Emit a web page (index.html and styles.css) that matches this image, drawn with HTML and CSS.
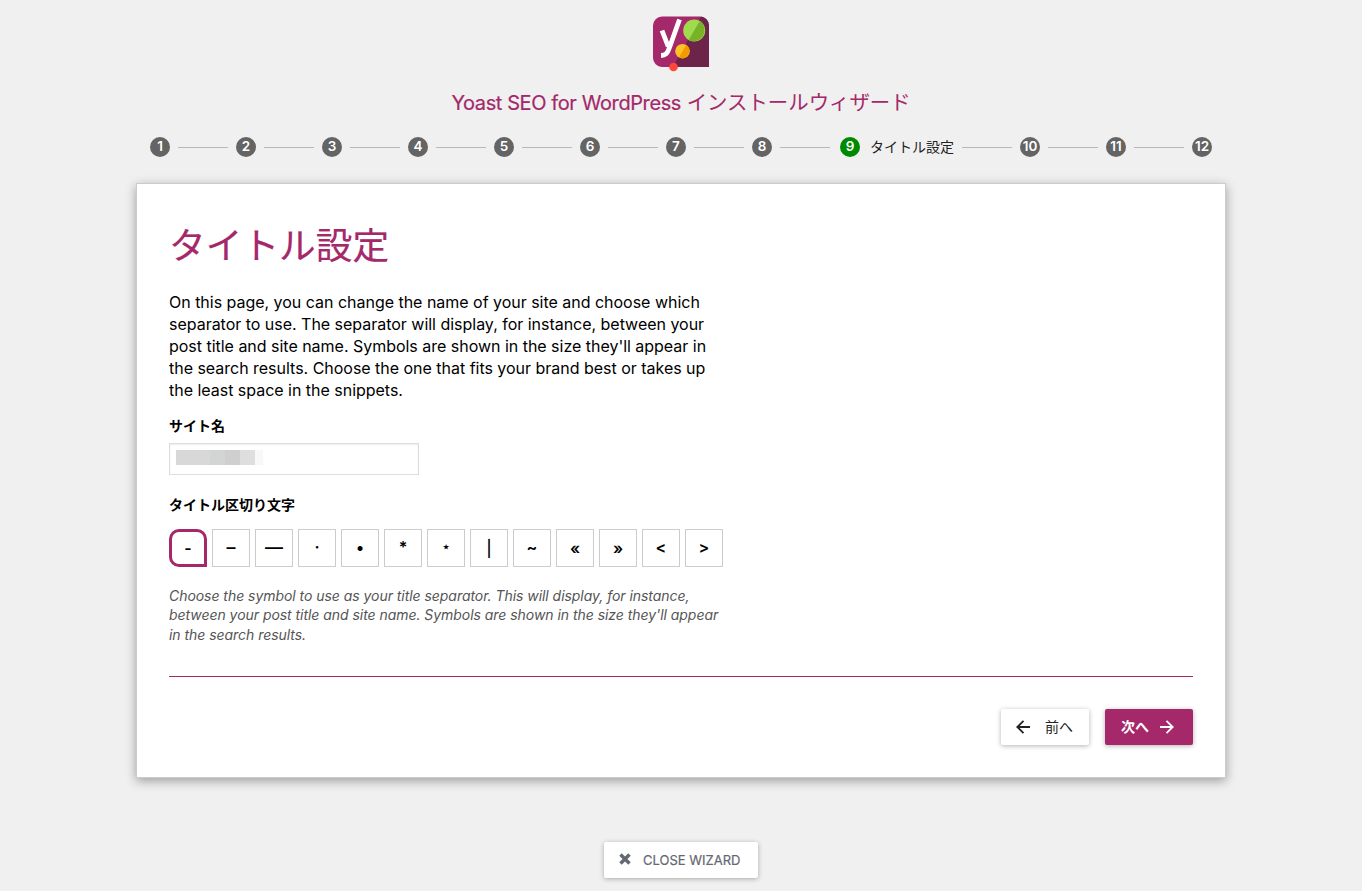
FILE: index.html
```
<!DOCTYPE html>
<html lang="ja">
<head>
    <meta charset="UTF-8">
    <meta name="viewport" content="width=device-width, initial-scale=1.0">
    <title>Yoast SEO for WordPress インストールウィザード</title>
    <link rel="stylesheet" href="styles.css">
</head>
<body>
    <header class="header">
        <svg class="logo" width="56" height="56" viewBox="0 0 56 56">
            <path d="M9 0.5h38a9 9 0 0 1 9 9V51H9a9 9 0 0 1-9-9V9.5a9 9 0 0 1 9-9z" fill="#a4286a"/>
            <path d="M48 0.5a9 9 0 0 1 8 9V51H20z" fill="#6c2548"/>
            <path d="M9 14.500l6.200 16M26.500 3.500L16.500 31.500c-2 6-4 8-8.500 8" fill="none" stroke="#fff" stroke-width="4.800"/>
            <circle cx="41.200" cy="14.500" r="11" fill="#9fda4f"/>
            <path d="M46.700 5a11 11 0 0 1-11 19z" fill="#77b227"/>
            <circle cx="29.500" cy="35.200" r="7.300" fill="#fec228"/>
            <path d="M33.200 28.900a7.300 7.300 0 0 1-7.300 12.600z" fill="#f49a00"/>
            <circle cx="20.500" cy="51" r="4.300" fill="#ff4639"/>
        </svg>
        <h1 class="product"><span class="product-en">Yoast SEO for WordPress</span> インストールウィザード</h1>
    </header>

    <ol class="stepper">
        <li class="step">1</li>
        <li class="step">2</li>
        <li class="step">3</li>
        <li class="step">4</li>
        <li class="step">5</li>
        <li class="step">6</li>
        <li class="step">7</li>
        <li class="step">8</li>
        <li class="step active">9</li>
        <li class="step-label">タイトル設定</li>
        <li class="step">10</li>
        <li class="step">11</li>
        <li class="step">12</li>
    </ol>

    <main class="card">
        <h2 class="title">タイトル設定</h2>
        <p class="intro">
            On this page, you can change the name of your site and choose which<br>
            separator to use. The separator will display, for instance, between your<br>
            post title and site name. Symbols are shown in the size they'll appear in<br>
            the search results. Choose the one that fits your brand best or takes up<br>
            the least space in the snippets.
        </p>

        <div class="label">サイト名</div>
        <div class="input">
            <div class="mask"><i></i><i></i><i></i><i></i><i></i></div>
        </div>

        <div class="label">タイトル区切り文字</div>
        <div class="separators">
            <div class="separator selected">-</div>
            <div class="separator dash">–</div>
            <div class="separator dash">—</div>
            <div class="separator raised">·</div>
            <div class="separator raised">•</div>
            <div class="separator raised">*</div>
            <div class="separator star">⋆</div>
            <div class="separator pipe">|</div>
            <div class="separator raised">~</div>
            <div class="separator">«</div>
            <div class="separator">»</div>
            <div class="separator raised">&lt;</div>
            <div class="separator raised">&gt;</div>
        </div>
        <p class="help">
            Choose the symbol to use as your title separator. This will display, for instance,<br>
            between your post title and site name. Symbols are shown in the size they'll appear<br>
            in the search results.
        </p>

        <div class="actions">
            <a href="#" class="button">
                <svg width="14" height="14" viewBox="0 0 14 14"><path d="M14 7H1.500M7.500 0.800L1.300 7l6.200 6.200"/></svg>
                <span>前へ</span>
            </a>
            <a href="#" class="button button-primary">
                <span>次へ</span>
                <svg width="14" height="14" viewBox="0 0 14 14"><path d="M0 7h12.500M6.500 0.800L12.700 7l-6.200 6.200"/></svg>
            </a>
        </div>
    </main>

    <a href="#" class="button button-close">
        <svg width="12" height="12" viewBox="0 0 12 12"><path d="M1.500 1.500l9 9M10.500 1.500l-9 9"/></svg>
        <span>CLOSE WIZARD</span>
    </a>
</body>
</html>
```
FILE: styles.css
```
* {
    margin: 0;
    padding: 0;
    box-sizing: border-box;
}

body {
    height: 891px;
    overflow: hidden;
    background: #f0f0f0;
    font-family: Inter, 'Noto Sans CJK JP', sans-serif;
    font-size: 14px;
    color: #000;
    display: flex;
    flex-direction: column;
    align-items: center;
}

.header {
    padding-top: 16px;
    display: flex;
    flex-direction: column;
    align-items: center;
}

.product {
    margin-top: 16px;
    height: 30px;
    font-size: 20.4px;
    line-height: 30px;
    font-weight: 400;
    color: #a4286a;
    white-space: nowrap;
}

.product-en {
    font-size: 20px;
    letter-spacing: -0.4px;
    -webkit-text-stroke: 0.2px #a4286a;
}

.stepper {
    width: 1062px;
    height: 20px;
    margin-top: 19px;
    display: flex;
    align-items: center;
    list-style: none;
}

.step {
    width: 20px;
    height: 20px;
    border-radius: 50%;
    background: #646464;
    color: #fff;
    font-size: 13.5px;
    font-weight: 600;
    line-height: 19px;
    display: flex;
    justify-content: center;
    flex-shrink: 0;
}

.step:not(:first-child) {
    margin-left: 66px;
    position: relative;
}

.step:not(:first-child)::before {
    content: '';
    position: absolute;
    left: -58px;
    top: 10px;
    width: 50px;
    height: 1px;
    background: #b8b8b8;
}

.step.active {
    background: #008a00;
    margin-left: 68px;
}

.step.active::before {
    left: -60px;
}

.step-label {
    margin-left: 10px;
    width: 84px;
    line-height: 20px;
    color: #222;
    white-space: nowrap;
}

.card {
    width: 1090px;
    height: 595px;
    margin-top: 26px;
    padding: 0 32px;
    border: 1px solid #ccc;
    background: #fff;
    box-shadow: 0 3px 10px rgba(0, 0, 0, 0.35);
}

.title {
    margin-top: 35px;
    height: 54px;
    font-size: 36.7px;
    line-height: 54px;
    font-weight: 400;
    color: #a4286a;
    -webkit-text-stroke: 0.2px #a4286a;
}

.intro {
    margin-top: 18px;
    font-size: 16px;
    line-height: 22px;
    letter-spacing: -0.02px;
    white-space: nowrap;
}

.label {
    margin-top: 15px;
    height: 20px;
    font-size: 14px;
    line-height: 20px;
    font-weight: 700;
}

.input {
    width: 250px;
    height: 32px;
    margin: 7px 0 20px;
    padding: 6px;
    border: 1px solid #ddd;
    box-shadow: inset 0 1px 2px rgba(0, 0, 0, 0.07);
}

.mask {
    display: flex;
    height: 15px;
}

.mask i {
    width: 34px;
    background: #d8d8d8;
}

.mask i:nth-child(2) {
    width: 15px;
    background: #d3d5d4;
}

.mask i:nth-child(3) {
    width: 15px;
    background: #cfcfcf;
}

.mask i:nth-child(4) {
    width: 15px;
    background: #dedede;
}

.mask i:nth-child(5) {
    width: 8px;
    background: #f8f8f8;
}

.separators {
    display: flex;
    gap: 5px;
    margin-top: 14px;
}

.separator {
    width: 38px;
    height: 38px;
    border: 1px solid #ccc;
    font-size: 16px;
    font-weight: 600;
    line-height: 36px;
    text-align: center;
}

.separator.selected {
    border: 3px solid #a4286a;
    border-radius: 10px 10px 0 10px;
    line-height: 32px;
}

.raised {
    line-height: 34px;
}

.dash {
    font-size: 18px;
    font-weight: 500;
}

.star {
    font-family: 'DejaVu Sans', sans-serif;
    font-size: 13px;
    line-height: 34px;
}

.pipe {
    font-weight: 500;
}

.help {
    margin-top: 19px;
    height: 59px;
    font-size: 14px;
    line-height: 19.4px;
    font-style: italic;
    letter-spacing: -0.045px;
    color: #555;
    white-space: nowrap;
}

.actions {
    margin-top: 31px;
    padding-top: 32px;
    border-top: 1px solid #a4286a;
    display: flex;
    justify-content: flex-end;
    gap: 16px;
}

.button {
    width: 88px;
    height: 36px;
    background: #fff;
    border-radius: 2px;
    box-shadow: 0 1px 5px rgba(0, 0, 0, 0.3);
    color: #222;
    font-size: 14px;
    line-height: 36px;
    text-decoration: none;
    display: flex;
    align-items: center;
    padding-left: 15px;
    gap: 15px;
}

.button svg {
    fill: none;
    stroke: currentColor;
    stroke-width: 1.8;
}

.button-primary {
    background: #a4286a;
    color: #fff;
    font-weight: 700;
    padding-left: 16px;
    gap: 11px;
}

.button-close {
    width: 154px;
    margin-top: 64px;
    color: #646871;
    font-size: 13px;
    gap: 12px;
}

.button-close svg {
    stroke-width: 3.5;
    margin-top: -2px;
}

.button-close span {
    -webkit-text-stroke: 0.2px #646871;
}
```
